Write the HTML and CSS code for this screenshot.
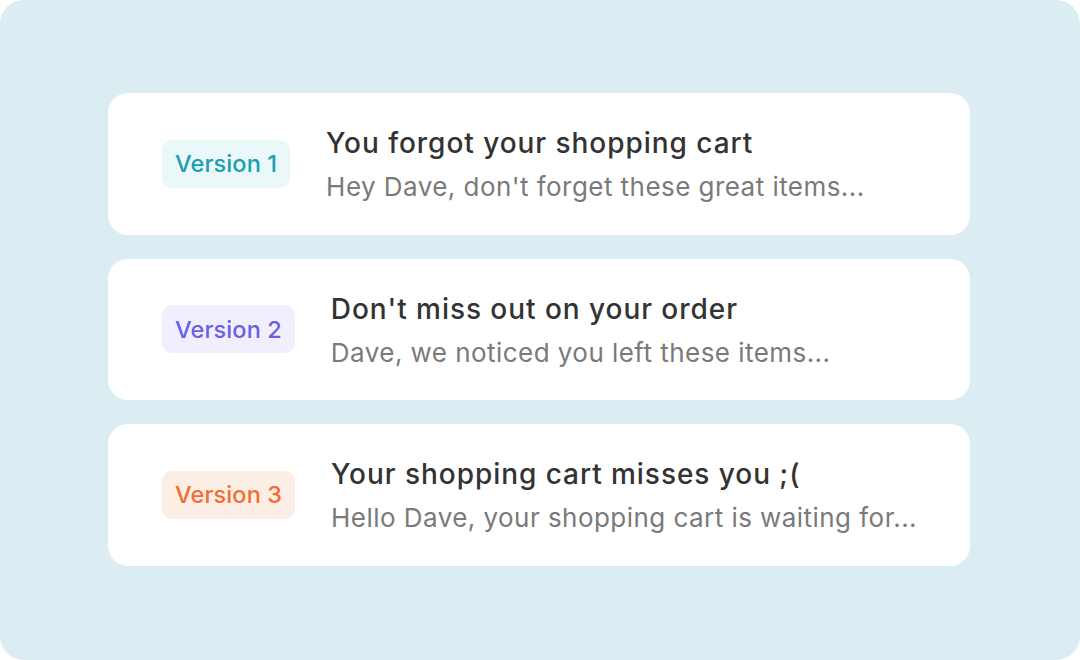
FILE: index.html
```html
<!DOCTYPE html>
<html>
<head>
<meta charset="utf-8">
<link rel="stylesheet" href="styles.css">
</head>
<body>
<div class="panel">
  <div class="list">
    <div class="card">
      <span class="badge v1">Version 1</span>
      <div class="text">
        <div class="title">You forgot your shopping cart</div>
        <div class="sub">Hey Dave, don't forget these great items...</div>
      </div>
    </div>
    <div class="card">
      <span class="badge v2">Version 2</span>
      <div class="text">
        <div class="title">Don't miss out on your order</div>
        <div class="sub">Dave, we noticed you left these items...</div>
      </div>
    </div>
    <div class="card">
      <span class="badge v3">Version 3</span>
      <div class="text">
        <div class="title">Your shopping cart misses you ;(</div>
        <div class="sub">Hello Dave, your shopping cart is waiting for...</div>
      </div>
    </div>
  </div>
</div>
</body>
</html>
```
FILE: styles.css
```css
* { box-sizing: border-box; }
html, body { margin: 0; padding: 0; background: #ffffff; }
body { font-family: Inter, "Noto Sans", sans-serif; }
.panel {
  width: 1080px;
  height: 660px;
  background: #dcecf3;
  border-radius: 24px;
  padding: 93px 110px 0 108px;
}
.list {
  display: flex;
  flex-direction: column;
  gap: 24px;
}
.card {
  height: 141.5px;
  background: #ffffff;
  border-radius: 20px;
  display: flex;
  align-items: center;
  padding-left: 54px;
  gap: 36px;
}
.badge {
  height: 48px;
  display: flex;
  align-items: center;
  padding: 0 13px;
  border-radius: 10px;
  font-size: 23.5px;
  font-weight: 500;
  letter-spacing: 0.1px;
}
.v1 { background: #eaf8fa; color: #1a9fae; }
.v2 { background: #f1effd; color: #6a5fe6; }
.v3 { background: #fdeee5; color: #f06e32; }
.text {
  display: flex;
  flex-direction: column;
  gap: 12px;
  margin-top: 1px;
}
.title {
  font-size: 28px;
  font-weight: 500;
  color: #333333;
  line-height: 34px;
  letter-spacing: 0.95px;
}
.sub {
  font-size: 26px;
  color: #7a7a7a;
  line-height: 30px;
  letter-spacing: 0.45px;
}
```
